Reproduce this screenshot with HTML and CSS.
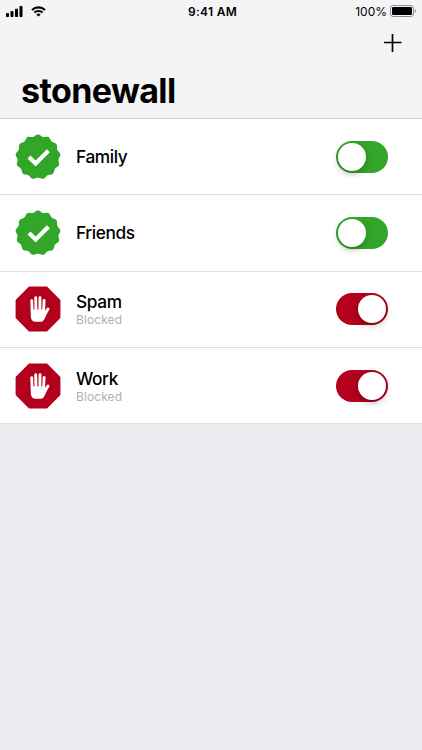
FILE: index.html
```html
<!DOCTYPE html>
<html lang="en">
<head>
  <meta charset="UTF-8">
  <meta name="viewport" content="width=device-width, initial-scale=1.0">
  <title>stonewall</title>
  <link rel="stylesheet" href="styles.css">
</head>
<body>
  <!-- Shared icons -->
  <svg class="icon-defs" width="0" height="0">
    <defs>
      <path id="lobe" d="M18.07 3 C19.8 2.6 21 .5 23 .5 S26.2 2.6 27.93 3 L23 23 Z"/>
      <symbol id="icon-allowed" viewBox="0 0 46 46">
        <g fill="#32a628">
          <circle cx="23" cy="23" r="20.4"/>
          <use href="#lobe"/>
          <use href="#lobe" transform="rotate(27.69 23 23)"/>
          <use href="#lobe" transform="rotate(55.38 23 23)"/>
          <use href="#lobe" transform="rotate(83.08 23 23)"/>
          <use href="#lobe" transform="rotate(110.77 23 23)"/>
          <use href="#lobe" transform="rotate(138.46 23 23)"/>
          <use href="#lobe" transform="rotate(166.15 23 23)"/>
          <use href="#lobe" transform="rotate(193.85 23 23)"/>
          <use href="#lobe" transform="rotate(221.54 23 23)"/>
          <use href="#lobe" transform="rotate(249.23 23 23)"/>
          <use href="#lobe" transform="rotate(276.92 23 23)"/>
          <use href="#lobe" transform="rotate(304.62 23 23)"/>
          <use href="#lobe" transform="rotate(332.31 23 23)"/>
        </g>
        <path d="M14 23 L20.6 29.5 L33.4 16.8" fill="none" stroke="#fff" stroke-width="4.2"/>
      </symbol>
      <symbol id="icon-blocked" viewBox="0 0 46 46">
        <path d="M14 .6 H32 L45.4 14 V32 L32 45.4 H14 L.6 32 V14 Z" fill="#b2001d"/>
        <g fill="none" stroke="#fff" stroke-width="2.9" stroke-linecap="round">
          <path d="M17.2 26 L16.7 14.6"/>
          <path d="M21 26 L20.7 11.8"/>
          <path d="M24.9 26 L25 11.8"/>
          <path d="M28.6 26 L29.1 14.4"/>
          <path d="M28.6 30.5 L33 23"/>
        </g>
        <path d="M15.8 23.5 H30 L31.5 28 C30 32 28.8 35.8 25.5 35.8 H20.8 C17 35.8 15.8 33 15.8 29.5 Z" fill="#fff"/>
      </symbol>
    </defs>
  </svg>

  <header class="header">
    <div class="status-bar">
      <div class="status-left">
        <svg width="17" height="11" viewBox="0 0 17 11">
          <rect x="0" y="7" width="3" height="4" rx=".7"/>
          <rect x="4.5" y="5" width="3" height="6" rx=".7"/>
          <rect x="9" y="2.7" width="3" height="8.3" rx=".7"/>
          <rect x="13.5" y="0" width="3" height="11" rx=".7"/>
        </svg>
        <svg width="15" height="11" viewBox="0 0 15 11">
          <path d="M1 4.1 C4.6 .4 10.4 .4 14 4.1 M3.4 6.6 C5.7 4.4 9.3 4.4 11.6 6.6" fill="none" stroke="#000" stroke-width="2.1"/>
          <path d="M7.5 10.6 L5.3 8.4 C6.5 7.2 8.5 7.2 9.7 8.4 Z"/>
        </svg>
      </div>
      <div class="status-time">9:41 AM</div>
      <div class="status-right">
        <span>100%</span>
        <svg width="27" height="12" viewBox="0 0 27 12">
          <rect x=".5" y=".5" width="23" height="11" rx="2.6" fill="none" stroke="#8c8c90"/>
          <rect x="2" y="2" width="20" height="8" rx="1.2"/>
          <path d="M24.8 4 C26.3 4.5 26.3 7.5 24.8 8 Z" fill="#8c8c90"/>
        </svg>
      </div>
    </div>
    <button class="add-btn" aria-label="Add">
      <svg width="18" height="18" viewBox="0 0 18 18">
        <path d="M8.5 0 V18 M0 8.5 H17.5" fill="none" stroke="#000" stroke-width="1.7"/>
      </svg>
    </button>
    <h1>stonewall</h1>
  </header>

  <div class="list">
    <div class="row">
      <svg class="row-icon"><use href="#icon-allowed"/></svg>
      <div class="row-text">
        <div class="row-title">Family</div>
      </div>
      <div class="toggle"></div>
    </div>
    <div class="row">
      <svg class="row-icon"><use href="#icon-allowed"/></svg>
      <div class="row-text">
        <div class="row-title">Friends</div>
      </div>
      <div class="toggle"></div>
    </div>
    <div class="row">
      <svg class="row-icon"><use href="#icon-blocked"/></svg>
      <div class="row-text">
        <div class="row-title">Spam</div>
        <div class="row-status">Blocked</div>
      </div>
      <div class="toggle blocked"></div>
    </div>
    <div class="row">
      <svg class="row-icon"><use href="#icon-blocked"/></svg>
      <div class="row-text">
        <div class="row-title">Work</div>
        <div class="row-status">Blocked</div>
      </div>
      <div class="toggle blocked"></div>
    </div>
  </div>
</body>
</html>
```
FILE: styles.css
```css
* {
  box-sizing: border-box;
}

body {
  margin: 0;
  font-family: Inter, "Liberation Sans", sans-serif;
  color: #000;
  background-color: #ebebf0;
}

.icon-defs {
  display: block;
}

svg {
  flex-shrink: 0;
}

.header {
  display: flex;
  flex-direction: column;
  height: 119px;
  background-color: #f4f4f6;
  border-bottom: 1px solid #d0d0d3;
}

.status-bar {
  display: grid;
  grid-template-columns: 1fr auto 1fr;
  align-items: center;
  height: 22px;
  padding: 0 5px 0 8px;
  font-size: 12px;
}

.status-left {
  display: flex;
  align-items: center;
  gap: 8px;
  margin-left: -2px;
}

.status-time {
  font-weight: 600;
  letter-spacing: 0.3px;
}

.status-right {
  display: flex;
  align-items: center;
  justify-content: flex-end;
  gap: 3px;
}

.add-btn {
  display: flex;
  align-self: flex-end;
  margin: 12px 20px 0 0;
  padding: 0;
  border: none;
  background: none;
}

h1 {
  margin: 18px 0 0 21px;
  font-size: 34px;
  font-weight: 700;
  line-height: 41px;
  letter-spacing: -0.6px;
}

.list {
  background-color: #fff;
}

.row {
  display: flex;
  align-items: center;
  height: 76.3px;
  padding: 0 34px 0 15px;
  border-bottom: 1px solid #dedee1;
}

.row-icon {
  width: 46px;
  height: 46px;
}

.row-text {
  flex-grow: 1;
  margin-left: 15px;
}

.row-title {
  font-size: 17.3px;
  font-weight: 500;
  line-height: 20px;
  letter-spacing: -0.4px;
}

.row-status {
  margin-bottom: -1px;
  font-size: 12px;
  line-height: 15px;
  letter-spacing: 0.1px;
  color: #b0b0b0;
}

.toggle {
  display: flex;
  align-items: center;
  width: 52px;
  height: 32px;
  padding: 0 2px;
  border-radius: 16px;
  background-color: #32a628;
}

.toggle::before {
  content: "";
  width: 28px;
  height: 28px;
  border-radius: 50%;
  background-color: #fff;
  box-shadow: 0 3px 6px rgba(0, 0, 0, 0.25);
}

.toggle.blocked {
  justify-content: flex-end;
  background-color: #b2001d;
}
```
